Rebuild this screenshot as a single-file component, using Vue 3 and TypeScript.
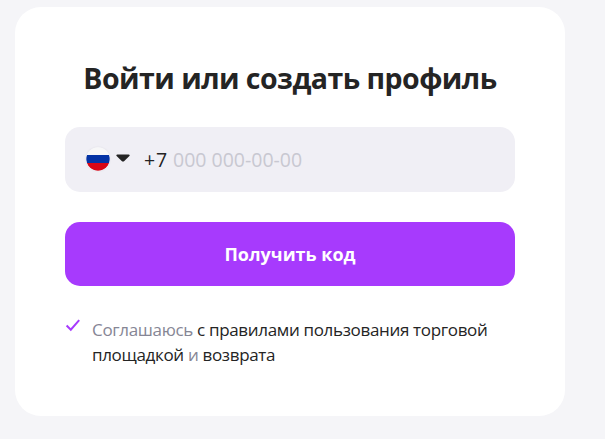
<template>
  <main class="login-page">
    <form class="login-card" @submit.prevent>
      <h1 class="login-title">Войти или создать профиль</h1>

      <div class="phone-field">
        <button class="country-button" type="button" aria-label="Россия">
          <svg class="flag" viewBox="0 0 24 24">
            <defs>
              <clipPath id="flag-circle"><circle cx="12" cy="12" r="11.7" /></clipPath>
            </defs>
            <g clip-path="url(#flag-circle)">
              <path fill="#f7f7f8" d="M0 0h24v8H0z" />
              <path fill="#0433a5" d="M0 8h24v8H0z" />
              <path fill="#d80616" d="M0 16h24v8H0z" />
            </g>
          </svg>
          <svg class="arrow" viewBox="0 0 14 8">
            <path fill="#242424" d="M1.300 .5h11.400c.9 0 1.300 1 .7 1.600L8.300 6.900c-.8.7-1.800.7-2.600 0L.6 2.100C0 1.500.4.5 1.300.5z" />
          </svg>
        </button>
        <label class="phone-label">
          <span class="phone-code">{{ phoneCode }}</span>
          <input v-model="phone" class="phone-input" type="tel" placeholder="000 000-00-00" />
        </label>
      </div>

      <button class="submit-button" type="submit">Получить код</button>

      <div class="agreement">
        <svg class="check" viewBox="0 0 16 14">
          <path d="M1.600 7.500l4.200 4.200L14.200 2.100" />
        </svg>
        <p class="agreement-text">
          <span class="agreement-line">Соглашаюсь <a class="agreement-link">с правилами пользования торговой</a></span>
          <span class="agreement-line"><a class="agreement-link">площадкой</a> и <a class="agreement-link">возврата</a></span>
        </p>
      </div>
    </form>
  </main>
</template>

<script setup lang="ts">
import { ref } from 'vue';

const phoneCode = '+7';
const phone = ref<string>('');
</script>

<style>
body {
  background: #f5f5f8;
}
</style>

<style scoped>
.login-page {
  box-sizing: border-box;
  height: 439px;
  padding: 7px 40px 23px 15px;
  overflow: hidden;
  font-family: "Segoe UI", "Open Sans", "Noto Sans", sans-serif;
  color: #242424;
}

.login-card {
  box-sizing: border-box;
  width: 550px;
  height: 409px;
  padding: 49px 50px 50px;
  border-radius: 26px;
  background: #fff;
}

.login-title {
  margin: 0 0 27px;
  height: 44px;
  font-size: 28.5px;
  font-weight: 700;
  line-height: 44px;
  letter-spacing: -0.53px;
  text-align: center;
  white-space: nowrap;
}

.phone-field {
  box-sizing: border-box;
  display: flex;
  align-items: center;
  height: 65px;
  padding: 0 20px 0 21px;
  border-radius: 15px;
  background: #f0eff5;
}

.country-button {
  display: flex;
  align-items: center;
  gap: 6px;
  margin-right: 14px;
  padding: 0 0 1px;
  border: 0;
  background: none;
  cursor: pointer;
}

.flag {
  width: 24px;
  height: 24px;
  border-radius: 50%;
  box-shadow: 0 0 2px rgba(0, 0, 0, 0.08);
}

.arrow {
  width: 14px;
  height: 8px;
  margin-bottom: 2px;
}

.phone-label {
  display: flex;
  align-items: center;
  font-size: 19.5px;
  line-height: 26px;
}

.phone-code {
  width: 29px;
  letter-spacing: 0.8px;
}

.phone-input {
  width: 200px;
  height: 26px;
  padding: 0;
  border: 0;
  outline: 0;
  background: none;
  font: inherit;
  color: inherit;
}

.phone-input::placeholder {
  color: #c8c8d1;
  opacity: 1;
}

.submit-button {
  display: block;
  width: 100%;
  height: 64px;
  margin-top: 30px;
  padding: 0;
  border: 0;
  border-radius: 15px;
  background: #a73afd;
  color: #fff;
  font: 700 18px/26px "Segoe UI", "Open Sans", "Noto Sans", sans-serif;
  cursor: pointer;
}

.agreement {
  display: flex;
  gap: 11px;
  margin-top: 31px;
}

.check {
  flex: none;
  width: 16px;
  height: 14px;
  margin-top: 1px;
  fill: none;
  stroke: #a73afd;
  stroke-width: 2;
}

.agreement-text {
  margin: 0;
  font-size: 17px;
  line-height: 25px;
  letter-spacing: -0.33px;
  color: #868695;
  white-space: nowrap;
}

.agreement-line {
  display: block;
}

.agreement-link {
  color: #242424;
  cursor: pointer;
}
</style>
